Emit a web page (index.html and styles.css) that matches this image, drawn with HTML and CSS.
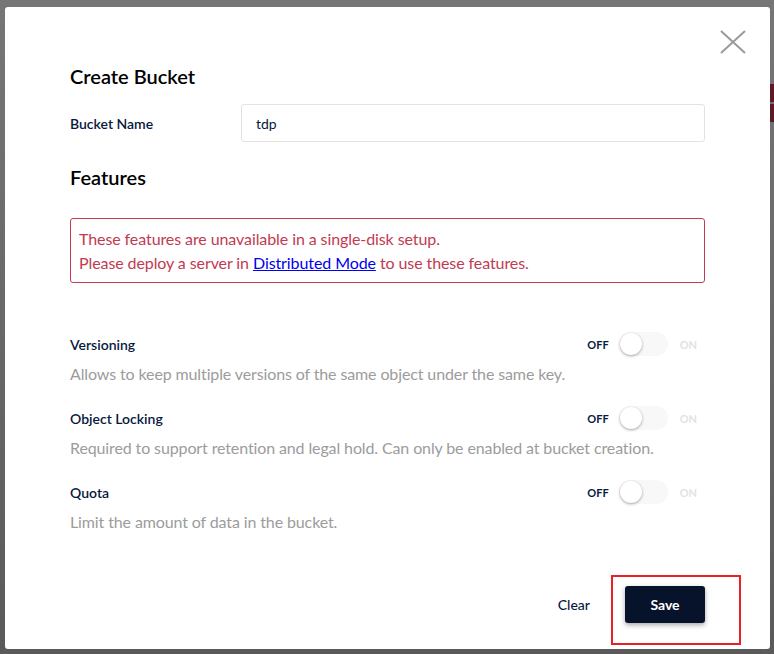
FILE: index.html
```html
<!DOCTYPE html>
<html lang="en">
<head>
<meta charset="utf-8">
<title>Create Bucket</title>
<link rel="stylesheet" href="styles.css">
</head>
<body>
<div class="backdrop">
  <div class="page-strip">
    <div class="strip-red"></div>
    <div class="strip-red second"></div>
  </div>
  <div class="modal">
    <button class="close" aria-label="Close">
      <svg width="26" height="24" viewBox="0 0 26 24"><path d="M1 1 L25 23 M25 1 L1 23" stroke="#9a9a9a" stroke-width="2" fill="none"/></svg>
    </button>
    <h2 class="title">Create Bucket</h2>
    <div class="field-row">
      <label class="field-label">Bucket Name</label>
      <div class="input">tdp</div>
    </div>
    <h2 class="title features-title">Features</h2>
    <div class="warning">
      <div>These features are unavailable in a single-disk setup.</div>
      <div>Please deploy a server in <a href="#">Distributed Mode</a> to use these features.</div>
    </div>
    <div class="feature first">
      <div class="feature-head">
        <span class="feature-label">Versioning</span>
        <div class="toggle"><span class="off">OFF</span><span class="track"><span class="knob"></span></span><span class="on">ON</span></div>
      </div>
      <div class="feature-desc">Allows to keep multiple versions of the same object under the same key.</div>
    </div>
    <div class="feature">
      <div class="feature-head">
        <span class="feature-label">Object Locking</span>
        <div class="toggle"><span class="off">OFF</span><span class="track"><span class="knob"></span></span><span class="on">ON</span></div>
      </div>
      <div class="feature-desc">Required to support retention and legal hold. Can only be enabled at bucket creation.</div>
    </div>
    <div class="feature">
      <div class="feature-head">
        <span class="feature-label">Quota</span>
        <div class="toggle"><span class="off">OFF</span><span class="track"><span class="knob"></span></span><span class="on">ON</span></div>
      </div>
      <div class="feature-desc">Limit the amount of data in the bucket.</div>
    </div>
    <div class="footer">
      <button class="clear">Clear</button>
      <div class="save-wrap">
        <button class="save">Save</button>
        <div class="highlight"></div>
      </div>
    </div>
  </div>
</div>
</body>
</html>
```

FILE: styles.css
```css
* { box-sizing: border-box; }
html, body { margin: 0; padding: 0; }
body {
  font-family: Lato, "Noto Sans", sans-serif;
  width: 774px;
  height: 654px;
  overflow: hidden;
}
.backdrop {
  position: relative;
  width: 774px;
  height: 654px;
  background: linear-gradient(#767676, #5a5a5a);
  padding: 7px 4px 5px 5px;
}
.page-strip {
  position: absolute;
  right: 0;
  top: 0;
  width: 4px;
  height: 654px;
}
.strip-red {
  position: absolute;
  left: 0;
  top: 84px;
  width: 4px;
  height: 18px;
  background: #5e1a24;
}
.strip-red.second { top: 104px; height: 18px; }
.modal {
  position: relative;
  width: 765px;
  height: 642px;
  background: #fff;
  border-radius: 3px;
  padding: 57px 65px 0 65px;
}
.close {
  position: absolute;
  top: 23px;
  right: 24px;
  width: 26px;
  height: 24px;
  padding: 0;
  border: 0;
  background: none;
  display: flex;
}
.title {
  margin: 0;
  font-size: 20px;
  line-height: 24px;
  font-weight: 600;
  color: #000;
}
.field-row {
  display: flex;
  align-items: center;
  margin-top: 16px;
}
.field-label {
  width: 171px;
  font-size: 14px;
  font-weight: 600;
  color: #07193e;
}
.input {
  flex: 1;
  height: 38px;
  border: 1px solid #e3e3e3;
  border-radius: 3px;
  padding: 0 14px;
  display: flex;
  align-items: center;
  font-size: 14px;
  color: #07193e;
}
.features-title { margin-top: 23px; }
.warning {
  margin-top: 29px;
  border: 1px solid #c83a51;
  border-radius: 3px;
  padding: 8px 8px 7px 8px;
  color: #c23a50;
  font-size: 16px;
  line-height: 24px;
  letter-spacing: -0.09px;
}
.warning a { color: #0000ee; text-decoration: underline; }
.feature { margin-top: 20px; }
.feature.first { margin-top: 49px; }
.feature-head {
  display: flex;
  align-items: center;
  justify-content: space-between;
  height: 24px;
}
.feature-label {
  font-size: 14px;
  font-weight: 600;
  color: #07193e;
}
.feature-desc {
  margin-top: 6px;
  font-size: 16px;
  line-height: 24px;
  color: #9c9c9c;
  letter-spacing: -0.12px;
}
.toggle {
  display: flex;
  align-items: center;
  margin-right: 8px;
  font-size: 11px;
  font-weight: 700;
}
.off { color: #07193e; }
.on { color: #e2e2e2; margin-left: 12px; }
.track {
  position: relative;
  margin-left: 10px;
  width: 49px;
  height: 24px;
  border-radius: 12px;
  background: #f8f8f8;
}
.knob {
  position: absolute;
  left: 1px;
  top: 1px;
  width: 22px;
  height: 22px;
  border-radius: 50%;
  background: #fff;
  box-shadow: 0 1px 3px rgba(0,0,0,0.35);
}
.footer {
  display: flex;
  justify-content: flex-end;
  align-items: center;
  margin-top: 52px;
  gap: 35px;
}
.clear {
  border: 0;
  background: none;
  padding: 0;
  font-family: inherit;
  font-size: 14px;
  font-weight: 500;
  color: #07193e;
}
.save-wrap { position: relative; }
.save {
  width: 80px;
  height: 37px;
  border: 0;
  border-radius: 3px;
  background: #07122b;
  color: #fff;
  font-family: inherit;
  font-size: 14px;
  font-weight: 700;
  box-shadow: 0 2px 5px rgba(0,0,0,0.35);
  display: block;
}
.highlight {
  position: absolute;
  left: -14px;
  top: -11px;
  width: 130px;
  height: 70px;
  border: 2px solid #e8202a;
}
```
